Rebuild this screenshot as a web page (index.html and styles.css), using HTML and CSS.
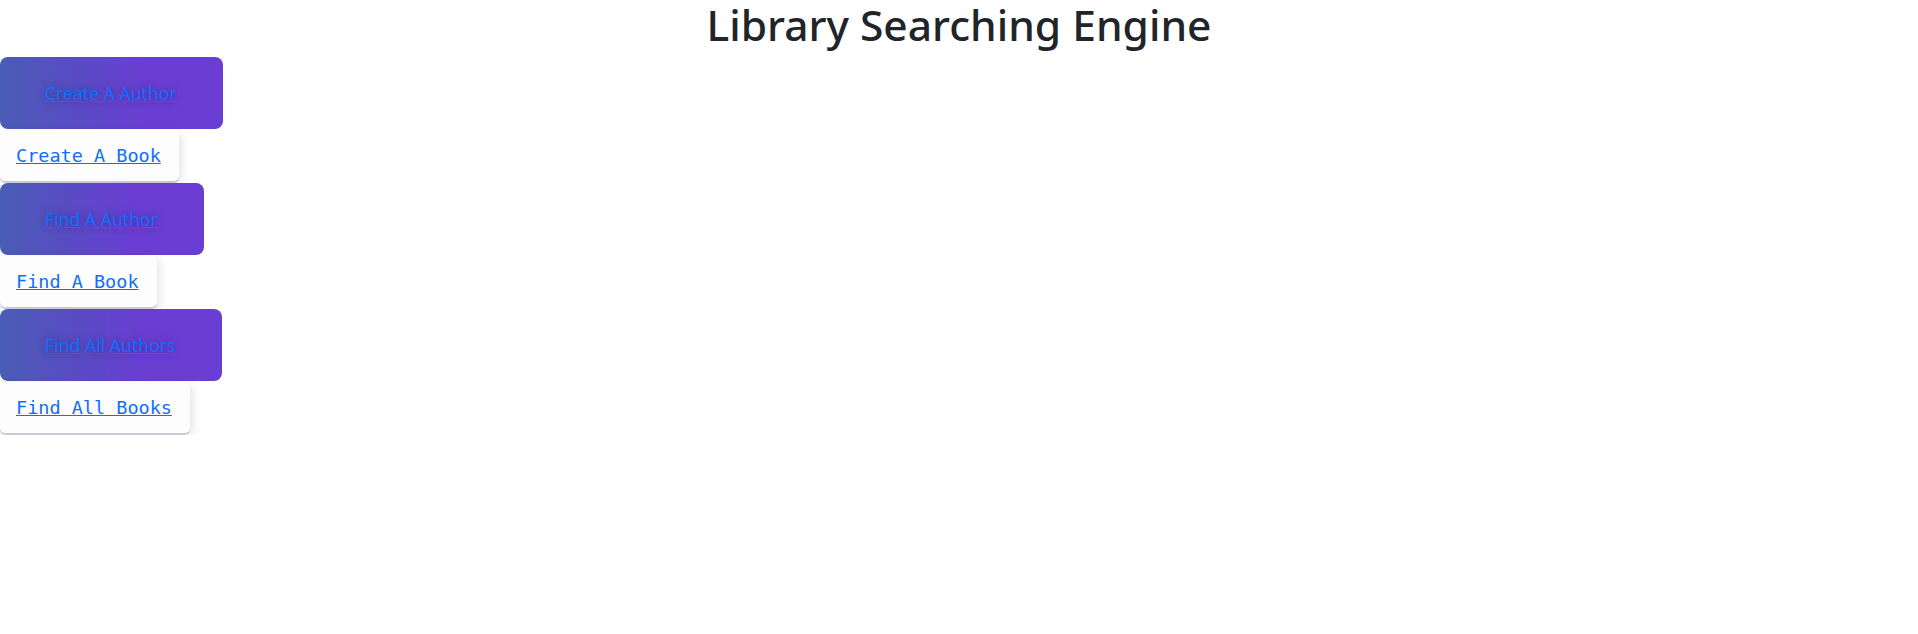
FILE: index.html
```html
<!DOCTYPE html>
<html lang="en">
<head>
<meta charset="utf-8">
<title>Library Searching Engine</title>
<link rel="stylesheet" href="styles.css">
</head>
<body>
<h1 class="title">Library Searching Engine</h1>
<nav class="menu">
  <div class="btn btn-author"><a href="#">Create A Author</a></div>
  <div class="btn btn-book"><a href="#">Create A Book</a></div>
  <div class="btn btn-author"><a href="#">Find A Author</a></div>
  <div class="btn btn-book"><a href="#">Find A Book</a></div>
  <div class="btn btn-author"><a href="#">Find All Authors</a></div>
  <div class="btn btn-book"><a href="#">Find All Books</a></div>
</nav>
</body>
</html>
```

FILE: styles.css
```css
html, body {
  margin: 0;
  padding: 0;
  background: #ffffff;
}
body {
  font-family: "Noto Sans", "Open Sans", sans-serif;
  color: #212529;
}
.title {
  margin: 0 0 7px;
  text-align: center;
  font-size: 42.5px;
  font-weight: 500;
  line-height: 50px;
  color: #212529;
}
.menu {
  display: flex;
  flex-direction: column;
  align-items: flex-start;
}
.btn a {
  color: #0d6efd;
  text-decoration: underline;
}
.btn-author {
  box-sizing: border-box;
  height: 72px;
  padding: 24px 46px 24px 45px;
  margin-bottom: 1px;
  border-radius: 8px;
  background: linear-gradient(90deg, #4a5cb5 0%, #5a4bc4 35%, #6a3ed3 65%, #6a3dd4 100%);
  font-size: 17.6px;
  line-height: 24px;
}
.btn-author a {
  text-shadow: 0 0 8px rgba(20, 10, 60, 0.35);
}
.btn-book {
  box-sizing: border-box;
  height: 51px;
  padding: 14px 18px 13px 16px;
  margin-bottom: 2px;
  border-radius: 5px;
  background: #fdfdfe;
  box-shadow: 0 2px 0 rgba(120, 110, 160, 0.28), 2px 3px 10px rgba(0, 0, 0, 0.12);
  font-family: "DejaVu Sans Mono", "Liberation Mono", monospace;
  font-size: 18.5px;
  line-height: 24px;
}
```
